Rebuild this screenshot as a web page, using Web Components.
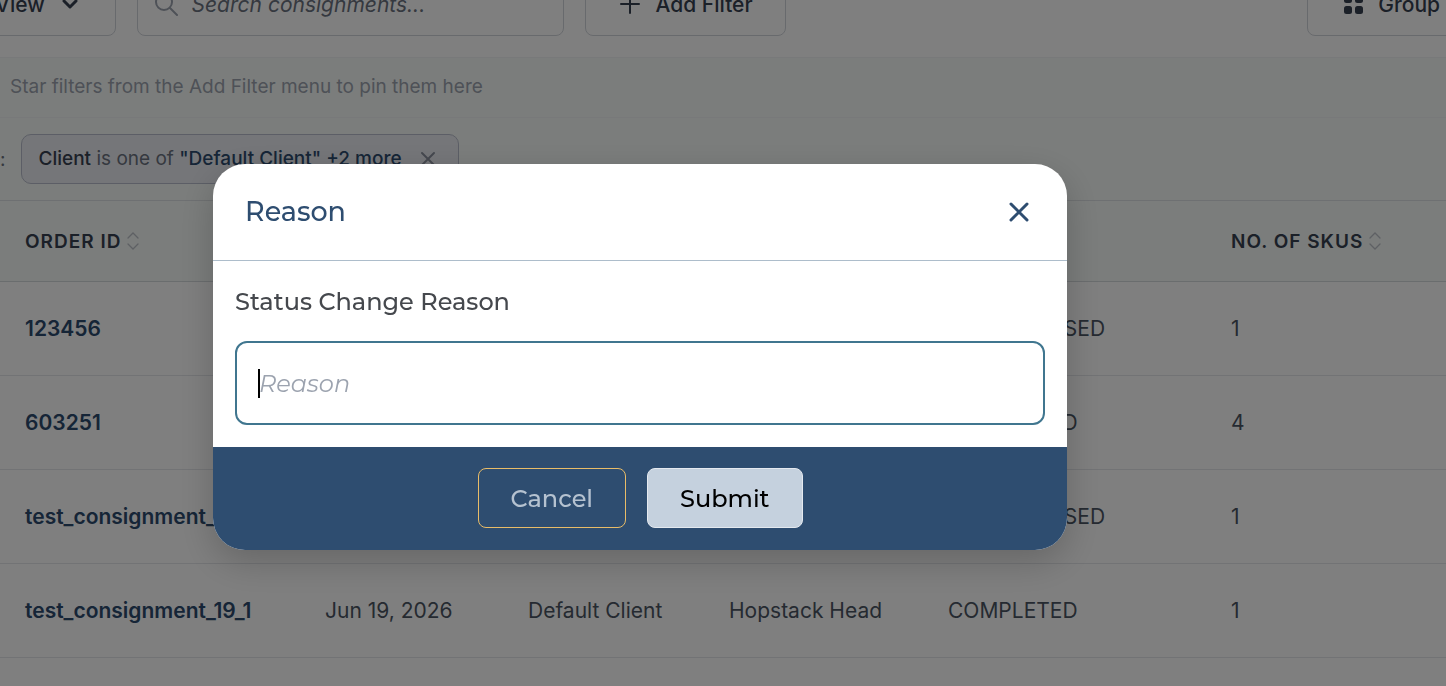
<!DOCTYPE html>
<html lang="en">
<head>
<meta charset="utf-8">
<title>Consignments</title>
<style>
  body {
    margin: 0;
    background: #ffffff;
    font-family: Inter, "Liberation Sans", sans-serif;
    overflow: hidden;
  }
</style>
</head>
<body>
<consignments-page></consignments-page>

<script>
/**
 * Attach an open shadow root filled from a template string.
 * @param {HTMLElement} host
 * @param {string} html
 * @return {ShadowRoot}
 */
function render(host, html) {
  const template = document.createElement('template');
  template.innerHTML = html;
  const root = host.attachShadow({mode: 'open'});
  root.appendChild(template.content.cloneNode(true));
  return root;
}

/**
 * Outlined button of the toolbar, icon and label go in the slot.
 */
class ToolbarButton extends HTMLElement {
  constructor() {
    super();
    render(this, `
      <style>
        :host { display: block; flex: none; }
        button {
          display: flex;
          align-items: center;
          gap: 14px;
          box-sizing: border-box;
          height: 64px;
          padding: 0 32px;
          border: 1px solid #d1d5db;
          border-radius: 8px;
          background: #ffffff;
          color: #374151;
          font: 500 21px/29px Inter, "Liberation Sans", sans-serif;
          white-space: nowrap;
        }
      </style>
      <button type="button"><slot></slot></button>
    `);
  }
}

/**
 * Search box with a magnifier.
 */
class SearchBox extends HTMLElement {
  constructor() {
    super();
    render(this, `
      <style>
        :host { display: block; flex: 0 1 427px; min-width: 0; }
        label {
          display: flex;
          align-items: center;
          gap: 14px;
          box-sizing: border-box;
          height: 64px;
          padding: 0 16px;
          border: 1px solid #d1d5db;
          border-radius: 8px;
        }
        svg { flex: none; }
        input {
          flex: 1;
          min-width: 0;
          padding: 0;
          border: 0;
          outline: 0;
          background: none;
          font: 400 21px/29px Inter, "Liberation Sans", sans-serif;
        }
        input::placeholder { color: #6b7280; opacity: 1; font-style: italic; }
      </style>
      <label>
        <svg width="24" height="24" viewBox="0 0 24 24" fill="none" stroke="#9ca3af" stroke-width="2" stroke-linecap="round">
          <circle cx="10" cy="10" r="8"/><path d="M16 16l7 7"/>
        </svg>
        <input type="text" placeholder="Search consignments..." aria-label="Search consignments">
      </label>
    `);
  }
}

/**
 * Top toolbar, its upper part is scrolled out of the window.
 */
class PageToolbar extends HTMLElement {
  constructor() {
    super();
    render(this, `
      <style>
        :host {
          display: flex;
          gap: 21px;
          margin: -28px -27px 0 -38px;
          padding-bottom: 21px;
        }
        .end { margin-left: auto; }
      </style>
      <toolbar-button>
        View
        <svg width="24" height="24" viewBox="0 0 24 24" fill="none" stroke="#374151" stroke-width="3" stroke-linecap="round" stroke-linejoin="round"><path d="M5 9l6 6 6-6"/></svg>
      </toolbar-button>
      <search-box></search-box>
      <toolbar-button>
        <svg width="24" height="24" viewBox="0 0 24 24" stroke="#374151" stroke-width="2" stroke-linecap="round"><path d="M12 3v18M3 12h18"/></svg>
        Add Filter
      </toolbar-button>
      <toolbar-button class="end">
        <svg width="24" height="24" viewBox="0 0 24 24" fill="#374151">
          <rect x="4" y="3" width="8" height="8" rx="2.5"/><rect x="15" y="3" width="8" height="8" rx="2.5"/>
          <rect x="4" y="14" width="8" height="8" rx="2.5"/><rect x="15" y="14" width="8" height="8" rx="2.5"/>
        </svg>
        Group
      </toolbar-button>
    `);
  }
}

/**
 * Removable filter chip.
 */
class FilterChip extends HTMLElement {
  constructor() {
    super();
    render(this, `
      <style>
        :host {
          display: flex;
          align-items: center;
          gap: 16px;
          box-sizing: border-box;
          height: 50px;
          padding: 0 20px 0 16px;
          border: 1px solid #b8bdcc;
          border-radius: 10px;
          background: #ebedf2;
          color: #6b7280;
          font-size: 19px;
          line-height: 24px;
          white-space: nowrap;
        }
        button { display: flex; padding: 0; border: 0; background: none; }
      </style>
      <span><slot></slot></span>
      <button type="button" aria-label="Remove filter">
        <svg width="20" height="20" viewBox="0 0 20 20" fill="none" stroke="#8b919e" stroke-width="2" stroke-linecap="round"><path d="M4 4l12 12M16 4L4 16"/></svg>
      </button>
    `);
  }
}

/**
 * Pinned filters hint and the row of active filters.
 */
class FilterBar extends HTMLElement {
  constructor() {
    super();
    render(this, `
      <style>
        :host { display: block; background: #f7fbf8; }
        p {
          margin: 0;
          padding: 16px 10px 17px;
          border: solid #f0f2f4;
          border-width: 1px 0;
          color: #9ca3af;
          font-size: 19px;
          line-height: 26px;
        }
        .active {
          display: flex;
          align-items: center;
          gap: 16px;
          padding: 16px 0;
          color: #6b7280;
          font-size: 19px;
        }
        b { font-weight: 500; color: #374151; }
        .value { color: #2d4b6e; }
      </style>
      <p>Star filters from the Add Filter menu to pin them here</p>
      <div class="active">
        <span>:</span>
        <filter-chip><b>Client</b> is one of <b class="value">"Default Client" +2 more</b></filter-chip>
      </div>
    `);
  }
}

/**
 * Column title with the two sort arrows.
 */
class SortLabel extends HTMLElement {
  constructor() {
    super();
    render(this, `
      <style>
        :host { display: flex; align-items: center; gap: 5px; }
      </style>
      <slot></slot>
      <svg width="14" height="20" viewBox="0 0 14 20" fill="none" stroke="#bcc1c8" stroke-width="1.3" stroke-linecap="round"><path d="M2 7l5-5 5 5M2 13l5 5 5-5"/></svg>
    `);
  }
}

const rows = [
  ['123456', '', '', '', 'UNPROCESSED', '1'],
  ['603251', '', '', '', 'COMPLETED', '4'],
  ['test_consignment_', '', '', '', 'UNPROCESSED', '1'],
  ['test_consignment_19_1', 'Jun 19, 2026', 'Default Client', 'Hopstack Head', 'COMPLETED', '1'],
];

/**
 * Table of consignments.
 */
class ConsignmentTable extends HTMLElement {
  constructor() {
    super();
    const body = rows.map(([id, ...cells]) => `
      <tr>
        <td><a href="#">${id}</a></td>
        ${cells.map((cell) => `<td>${cell}</td>`).join('')}
      </tr>`).join('');

    render(this, `
      <style>
        :host { display: block; }
        table { width: 100%; border-collapse: separate; border-spacing: 0; table-layout: fixed; }
        th, td {
          box-sizing: border-box;
          padding: 0 0 0 25px;
          border-bottom: 1px solid #e5e7eb;
          text-align: left;
          white-space: nowrap;
        }
        th {
          height: 82px;
          border-top: 1px solid #dde1e4;
          border-bottom-color: #d5dadd;
          background: #f7fbf8;
          color: #374151;
          font-size: 19px;
          font-weight: 600;
          letter-spacing: 1px;
        }
        td { height: 94px; color: #4b5563; font-size: 21px; line-height: 29px; }
        a { color: #2d4b6e; font-weight: 600; text-decoration: none; }
        .id { width: 300px; }
        .date { width: 203px; }
        .client { width: 201px; }
        .customer { width: 219px; }
        .status { width: 283px; }
      </style>
      <table>
        <colgroup><col class="id"><col class="date"><col class="client"><col class="customer"><col class="status"><col></colgroup>
        <thead>
          <tr>
            <th><sort-label>ORDER ID</sort-label></th>
            <th></th><th></th><th></th><th></th>
            <th><sort-label>NO. OF SKUS</sort-label></th>
          </tr>
        </thead>
        <tbody>${body}</tbody>
      </table>
    `);
  }
}

/**
 * Modal window: title, slotted body, slotted actions.
 */
class ModalDialog extends HTMLElement {
  constructor() {
    super();
    const root = render(this, `
      <style>
        :host {
          position: fixed;
          inset: 0;
          display: flex;
          align-items: center;
          justify-content: center;
          padding: 28px 166px 0 0;
          background: rgba(0, 0, 0, 0.5);
          font-family: Montserrat, Inter, "Liberation Sans", sans-serif;
        }
        section {
          width: 854px;
          max-width: 100%;
          overflow: hidden;
          border-radius: 32px;
          background: #ffffff;
          box-shadow: 0 12px 36px rgba(0, 0, 0, 0.2);
        }
        header {
          display: flex;
          align-items: center;
          justify-content: space-between;
          padding: 32px;
          border-bottom: 1px solid #adbdcb;
        }
        h2 { margin: 0; color: #2e4d70; font-size: 27px; font-weight: 500; line-height: 32px; }
        header button { display: flex; padding: 0; border: 0; background: none; }
        .body { padding: 22px; }
        footer {
          display: flex;
          justify-content: center;
          gap: 21px;
          padding: 21px 22px 22px;
          background: #2e4d70;
        }
      </style>
      <section role="dialog" aria-labelledby="title">
        <header>
          <h2 id="title"></h2>
          <button type="button" aria-label="Close">
            <svg width="32" height="32" viewBox="0 0 32 32" fill="none" stroke="#2e4d70" stroke-width="3" stroke-linecap="round"><path d="M8 8l16 16M24 8L8 24"/></svg>
          </button>
        </header>
        <div class="body"><slot></slot></div>
        <footer><slot name="actions"></slot></footer>
      </section>
    `);
    root.getElementById('title').textContent = this.getAttribute('heading');
  }
}

/**
 * Labelled text field of the modal.
 */
class TextField extends HTMLElement {
  constructor() {
    super();
    const root = render(this, `
      <style>
        :host { display: block; }
        label { display: block; margin-bottom: 20px; color: #45484d; font-size: 24px; font-weight: 500; line-height: 38px; }
        .box { position: relative; }
        input {
          display: block;
          box-sizing: border-box;
          width: 100%;
          height: 84px;
          padding: 0 22px;
          border: 2px solid #40768f;
          border-radius: 12px;
          outline: 0;
          background: #ffffff;
          font: inherit;
          font-size: 24px;
          caret-color: transparent;
        }
        input::placeholder { color: #9ca3af; opacity: 1; font-style: italic; }
        /* steady caret, does not blink */
        .box::after {
          content: "";
          position: absolute;
          left: 23px;
          top: 28px;
          width: 2px;
          height: 29px;
          background: #000000;
        }
      </style>
      <label for="field"></label>
      <div class="box"><input id="field" type="text"></div>
    `);
    root.querySelector('label').textContent = this.getAttribute('label');
    root.querySelector('input').placeholder = this.getAttribute('placeholder');
  }
}

/**
 * Button of the modal footer.
 */
class ActionButton extends HTMLElement {
  constructor() {
    super();
    render(this, `
      <style>
        :host { display: block; }
        button {
          box-sizing: border-box;
          height: 60px;
          padding: 0 32px;
          border: 1px solid #e8bc68;
          border-radius: 8px;
          background: none;
          color: #b5c2d0;
          font: inherit;
          font-size: 24px;
          font-weight: 500;
        }
        :host([primary]) button {
          border-color: #e4e9ef;
          background: #c5d1de;
          color: #000000;
        }
      </style>
      <button type="button"><slot></slot></button>
    `);
  }
}

/**
 * The whole page.
 */
class ConsignmentsPage extends HTMLElement {
  constructor() {
    super();
    render(this, `
      <style>
        :host { display: flow-root; min-height: 100vh; box-sizing: border-box; overflow: hidden; }
      </style>
      <page-toolbar></page-toolbar>
      <filter-bar></filter-bar>
      <consignment-table></consignment-table>
      <modal-dialog heading="Reason">
        <text-field label="Status Change Reason" placeholder="Reason"></text-field>
        <action-button slot="actions">Cancel</action-button>
        <action-button slot="actions" primary>Submit</action-button>
      </modal-dialog>
    `);
  }
}

customElements.define('toolbar-button', ToolbarButton);
customElements.define('search-box', SearchBox);
customElements.define('page-toolbar', PageToolbar);
customElements.define('filter-chip', FilterChip);
customElements.define('filter-bar', FilterBar);
customElements.define('sort-label', SortLabel);
customElements.define('consignment-table', ConsignmentTable);
customElements.define('modal-dialog', ModalDialog);
customElements.define('text-field', TextField);
customElements.define('action-button', ActionButton);
customElements.define('consignments-page', ConsignmentsPage);
</script>
</body>
</html>
